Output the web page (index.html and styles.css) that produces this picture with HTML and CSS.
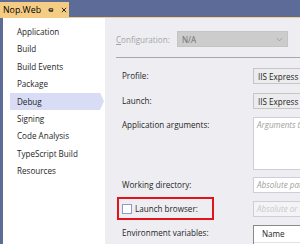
FILE: index.html
```
<!DOCTYPE html>
<html lang="en">
<head>
  <meta charset="UTF-8">
  <title>Nop.Web - Debug</title>
  <link rel="stylesheet" href="styles.css">
</head>
<body>
  <!-- document tab strip -->
  <div class="tabstrip">
    <div class="tab">
      <span class="tab-title">Nop.Web</span>
      <svg class="tab-icon" viewBox="0 0 7 7">
        <path d="M0 3.5h2M2 1.5v4M2 2h3.5v3H2M2.5 4.3h3" fill="none" stroke="#1e1e1e" stroke-width="1"/>
      </svg>
      <svg class="tab-icon close" viewBox="0 0 7 7">
        <path d="M1 1l5 5M6 1l-5 5" fill="none" stroke="#1e1e1e" stroke-width="1.1"/>
      </svg>
    </div>
  </div>
  <div class="tab-rule"></div>

  <div class="main">
    <!-- property pages list -->
    <ul class="sidebar">
      <li>Application</li>
      <li>Build</li>
      <li>Build Events</li>
      <li>Package</li>
      <li class="active">Debug</li>
      <li>Signing</li>
      <li>Code Analysis</li>
      <li>TypeScript Build</li>
      <li>Resources</li>
    </ul>

    <div class="content">
      <div class="config-row">
        <span class="config-label"><u>C</u>onfiguration:</span>
        <div class="combo disabled">
          <span>N/A</span>
          <svg class="chevron" viewBox="0 0 8 5"><path d="M1 1l3 3 3-3" fill="none" stroke="#9a9a9a" stroke-width="1"/></svg>
        </div>
      </div>
      <div class="separator"></div>

      <div class="form">
        <div class="row">
          <span class="label">Profile:</span>
          <div class="combo">IIS Express</div>
        </div>
        <div class="row">
          <span class="label">Launch:</span>
          <div class="combo">IIS Express</div>
        </div>
        <div class="row">
          <span class="label">Application arguments:</span>
          <div class="textbox multiline">Arguments to be passed</div>
        </div>
        <div class="row">
          <span class="label">Working directory:</span>
          <div class="textbox">Absolute path</div>
        </div>
        <div class="row">
          <span class="label">
            <span class="callout">
              <span class="checkbox"></span>
              Launch browser:
            </span>
          </span>
          <div class="textbox disabled">Absolute or relative URL</div>
        </div>
        <div class="row">
          <span class="label">Environment variables:</span>
          <div class="grid">
            <div class="grid-head">Name</div>
          </div>
        </div>
      </div>
    </div>
  </div>
</body>
</html>
```

FILE: styles.css
```
* { margin:0; padding:0; box-sizing:border-box; }
body {
  width:300px; height:244px; overflow:hidden;
  background:#5d6b99;
  font-family:"Open Sans", "Noto Sans", sans-serif;
  font-size:8.1px; color:#1e1e1e;
}

/* tab strip */
.tabstrip { height:17px; display:flex; align-items:flex-end; }
.tab {
  height:15px; width:69px;
  background:#f5cc84;
  display:flex; align-items:center;
  padding-left:3px;
  color:#000;
}
.tab-title { font-size:8.8px; }
.tab-icon { width:6px; height:6px; margin-left:7px; }
.tab-icon.close { margin-left:7px; }
.tab-rule { height:1px; background:#f5cc84; }

.main { display:flex; height:226px; margin-left:3px; }

/* sidebar */
.sidebar {
  list-style:none;
  width:102px; background:#fff;
  padding-top:5px;
}
.sidebar li {
  height:17.4px; line-height:17.4px;
  padding-left:14px;
}
.sidebar li.active {
  margin-left:7px; padding-left:7px;
  width:94px;
  background:#d8ddf5;
  clip-path:polygon(0 0, 90px 0, 94px 50%, 90px 100%, 0 100%);
}

/* content */
.content {
  flex:1; background:#eeeef2;
  padding:13px 0 0 11px;
  overflow:hidden;
}
.config-row { display:flex; align-items:center; height:16px; }
.config-label { width:61px; color:#a2a4a8; }
.combo {
  height:16px; flex:none;
  background:#ececee; border:1px solid #c6c6c6;
  display:flex; align-items:center;
  padding-left:4px;
  width:80px;
}
.combo.disabled {
  width:111px; background:#cccccc; border-color:#c4c4c4;
  color:#6e6e6e; justify-content:space-between; padding-right:4px;
}
.chevron { width:7px; height:5px; }
.separator { height:1px; background:#a8a8a8; margin-top:10px; }

.form { padding-left:6px; padding-top:10px; }
.row { display:flex; align-items:flex-start; margin-bottom:8px; }
.row:first-child { margin-bottom:9px; }
.row:nth-child(3) { margin-bottom:7px; }
.label { width:131px; flex:none; line-height:16px; display:flex; }

.textbox {
  width:80px; height:16px; flex:none;
  background:#fff; border:1px solid #cccedb;
  padding:0 3px; line-height:14px;
  font-style:italic; color:#a0a0a0;
  white-space:nowrap; overflow:hidden;
}
.textbox.multiline { height:53px; }
.textbox.disabled { background:#f4f4f6; color:#c8c8cc; }

.callout {
  display:flex; align-items:center; gap:3px;
  height:23px;
  margin:-4px 0 -3px -5px;
  padding:0 14px 0 3px;
  border:2px solid #e3131e;
}
.checkbox {
  width:10px; height:10px;
  background:#fff; border:1px solid #8e9bc6;
}

.grid {
  width:80px; height:30px; flex:none;
  background:#fff;
  border:1px solid #cccedb; border-left-color:#8a8a8a; border-top-color:#8a8a8a;
}
.grid-head { padding-left:8px; line-height:16px; border-bottom:1px solid #e2e2e2; }
```
